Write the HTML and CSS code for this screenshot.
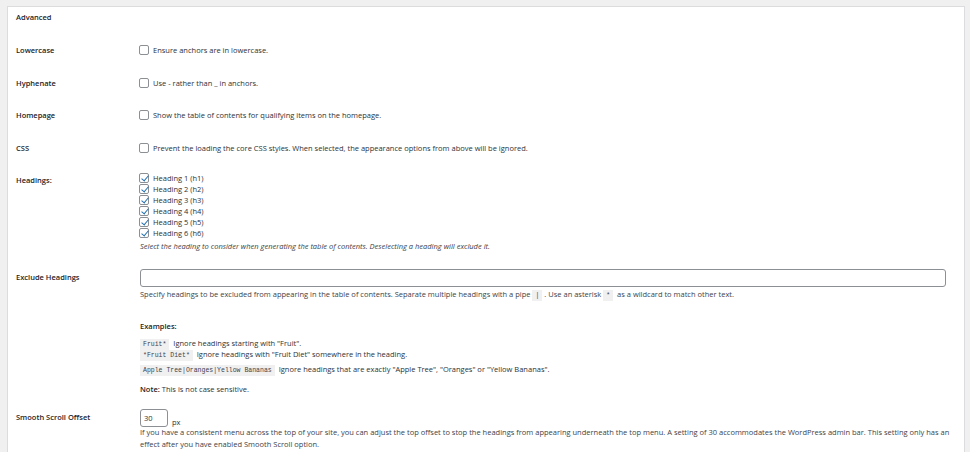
FILE: index.html
```html
<!DOCTYPE html>
<html lang="en">
<head>
    <meta charset="UTF-8">
    <title>Table of Contents: Advanced</title>
    <link rel="stylesheet" href="styles.css">
</head>
<body>
    <div class="panel">
        <h3 class="panel-title">Advanced</h3>

        <div class="rows">
            <!-- Simple checkbox options -->
            <div class="row">
                <div class="row-label">Lowercase</div>
                <div class="row-field">
                    <label class="check"><input type="checkbox"> Ensure anchors are in lowercase.</label>
                </div>
            </div>
            <div class="row">
                <div class="row-label">Hyphenate</div>
                <div class="row-field">
                    <label class="check"><input type="checkbox"> Use - rather than _ in anchors.</label>
                </div>
            </div>
            <div class="row">
                <div class="row-label">Homepage</div>
                <div class="row-field">
                    <label class="check"><input type="checkbox"> Show the table of contents for qualifying items on the homepage.</label>
                </div>
            </div>
            <div class="row">
                <div class="row-label">CSS</div>
                <div class="row-field">
                    <label class="check"><input type="checkbox"> Prevent the loading the core CSS styles. When selected, the appearance options from above will be ignored.</label>
                </div>
            </div>

            <!-- Headings -->
            <div class="row row-headings">
                <div class="row-label">Headings:</div>
                <div class="row-field field-headings">
                    <label class="check check-list"><input type="checkbox" checked> Heading 1 (h1)</label>
                    <label class="check check-list"><input type="checkbox" checked> Heading 2 (h2)</label>
                    <label class="check check-list"><input type="checkbox" checked> Heading 3 (h3)</label>
                    <label class="check check-list"><input type="checkbox" checked> Heading 4 (h4)</label>
                    <label class="check check-list"><input type="checkbox" checked> Heading 5 (h5)</label>
                    <label class="check check-list"><input type="checkbox" checked> Heading 6 (h6)</label>
                    <p class="description italic">Select the heading to consider when generating the table of contents. Deselecting a heading will exclude it.</p>
                </div>
            </div>

            <!-- Exclude Headings -->
            <div class="row row-exclude">
                <div class="row-label">Exclude Headings</div>
                <div class="row-field field-input">
                    <input type="text" class="text-wide">
                    <p class="description">Specify headings to be excluded from appearing in the table of contents. Separate multiple headings with a pipe <code>|</code>. Use an asterisk <code>*</code> as a wildcard to match other text.</p>
                    <p class="examples-title">Examples:</p>
                    <p class="example"><code>Fruit*</code> Ignore headings starting with "Fruit".</p>
                    <p class="example"><code>*Fruit Diet*</code> Ignore headings with "Fruit Diet" somewhere in the heading.</p>
                    <p class="example example-last"><code>Apple Tree|Oranges|Yellow Bananas</code> Ignore headings that are exactly "Apple Tree", "Oranges" or "Yellow Bananas".</p>
                    <p class="note"><strong>Note:</strong> This is not case sensitive.</p>
                </div>
            </div>

            <!-- Smooth Scroll Offset -->
            <div class="row row-offset">
                <div class="row-label">Smooth Scroll Offset</div>
                <div class="row-field field-input">
                    <div class="offset-line"><input type="text" class="text-small" value="30"> <span class="unit">px</span></div>
                    <p class="description">If you have a consistent menu across the top of your site, you can adjust the top offset to stop the headings from appearing underneath the top menu. A setting of 30 accommodates the WordPress admin bar. This setting only has an effect after you have enabled Smooth Scroll option.</p>
                </div>
            </div>
        </div>
    </div>
</body>
</html>
```

FILE: styles.css
```css
/* Page */
body {
    background-color: #f0f0f1;
    color: #2c3338;
    font-family: "Open Sans", Arial, sans-serif;
    font-size: 7.5px;
    line-height: 12px;
    margin: 0;
    height: 452px;
    overflow: hidden;
}

p {
    margin: 0;
}

/* Settings Panel */
.panel {
    background-color: #ffffff;
    border: 1px solid #dcdcde;
    margin: 6px 5px 0 7px;
    padding: 0 8px;
    min-height: 500px;
}

.panel-title {
    color: #1d2327;
    font-size: 7.5px;
    font-weight: 600;
    line-height: 12px;
    margin: 4px 0 0;
}

.rows {
    margin-top: 11px;
}

/* Rows */
.row {
    display: flex;
    padding: 10px 0 10.5px;
}

.row-label {
    color: #1d2327;
    font-weight: 600;
    width: 124px;
    flex-shrink: 0;
}

.row-field {
    flex: 1;
    padding-right: 4px;
}

/* Checkboxes */
.check {
    display: flex;
    align-items: center;
    gap: 4px;
}

.check input {
    appearance: none;
    -webkit-appearance: none;
    width: 10px;
    height: 10px;
    margin: 0 0 0 -1px;
    border: 1px solid #8c8f94;
    border-radius: 2px;
    background: #ffffff;
    position: relative;
    flex-shrink: 0;
}

.check input:checked::before {
    content: "";
    position: absolute;
    left: 2.5px;
    top: 0px;
    width: 3px;
    height: 6px;
    border: solid #2271b1;
    border-width: 0 1.6px 1.6px 0;
    transform: rotate(40deg);
}

.check-list {
    line-height: 11px;
    height: 11px;
}

.field-headings {
    margin-top: -1.5px;
}

.row-headings {
    padding-bottom: 9px;
}

.description {
    color: #3c434a;
}

.italic {
    font-style: italic;
    margin-top: 1.5px;
}

/* Text inputs */
.field-input {
    margin-top: -2px;
}

.text-wide,
.text-small {
    box-sizing: border-box;
    height: 18px;
    border: 1px solid #8c8f94;
    border-radius: 3px;
    font-family: "Open Sans", Arial, sans-serif;
    font-size: 7.5px;
    color: #2c3338;
    padding: 0 3px;
    margin: 0;
}

.text-wide {
    display: block;
    width: 806px;
}

.field-input .description {
    margin-top: 0.5px;
}

.row-exclude {
    padding-bottom: 6px;
}

.examples-title {
    font-weight: 600;
    color: #1d2327;
    margin-top: 18px;
}

.example {
    margin-top: 5px;
    height: 11px;
}

.example + .example {
    margin-top: 0;
}

.example-last {
    margin-top: 4px !important;
}

code {
    font-family: "Liberation Mono", monospace;
    font-size: 6.5px;
    background-color: #f0f0f1;
    color: #3c434a;
    padding: 2px 3px;
    margin-right: 2px;
}

.note {
    margin-top: 9px;
}

.note strong {
    font-weight: 600;
    color: #1d2327;
}

/* Offset input */
.offset-line {
    display: flex;
    align-items: flex-end;
    gap: 4px;
    height: 18px;
}

.text-small {
    width: 28px;
}

.unit {
    line-height: 10px;
}

.row-offset .description {
    margin-top: -0.5px;
}
```
